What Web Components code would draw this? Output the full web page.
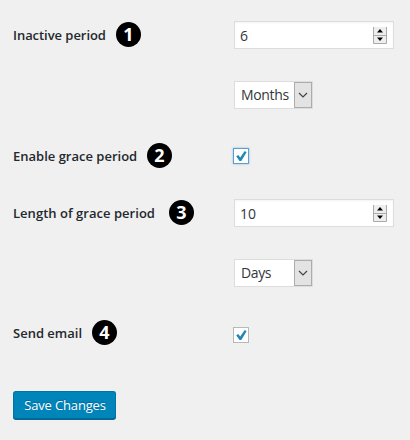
<!DOCTYPE html>
<html lang="en"><head><meta charset="utf-8"><title>Settings</title>
<style>html,body{margin:0;background:#f0f0f0}body{font-family:"Open Sans","Noto Sans",sans-serif;color:#23282d}</style></head>
<body><settings-form></settings-form>
<script>
const define=(name,html)=>customElements.define(name,class extends HTMLElement{
  constructor(){super();const t=document.createElement('template');t.innerHTML=html;
    this.attachShadow({mode:'open'}).append(t.content.cloneNode(true));}
});
define('number-badge',`<style>:host{display:flex;align-items:center;justify-content:center;flex:none;width:25px;height:25px;border-radius:50%;background:#000;color:#fff;font:700 18px/25px "Open Sans",sans-serif}</style><span><slot></slot></span>`);
define('setting-row',`<style>:host{display:grid;grid-template-columns:221px 1fr;align-items:center;padding-left:13px;box-sizing:border-box}
.label{display:flex;align-items:center;font:600 13px/20px "Open Sans",sans-serif;white-space:nowrap;padding-bottom:var(--lift,1px)}
.text{width:var(--w);letter-spacing:var(--ls,0)}</style><div class="label"><span class="text"><slot name="label"></slot></span><slot name="badge"></slot></div><div><slot></slot></div>`);
define('number-field',`<style>:host{display:flex;box-sizing:border-box;width:160px;height:28px;border:1px solid #ddd;background:#fff;padding:0 6px 0 5px;align-items:center;justify-content:space-between;font-size:14px;line-height:20px;color:#32373c;box-shadow:inset 0 1px 2px rgba(0,0,0,.05)}svg{display:block}span{padding-top:1px}</style><span><slot></slot></span>
<svg width="14" height="17" viewBox="0 0 14 17"><path fill="#eee" d="M0 0h14v17H0z"/><path d="M.5 0v16.500h13V0M1 8.500h12" fill="none" stroke="#aaa"/><path d="M7 2l3 3.500H4zM7 14l3-3.500H4z" fill="#000"/></svg>`);
define('select-field',`<style>:host{display:flex;box-sizing:border-box;width:79px;height:28px;border:1px solid #ddd;background:#fff;padding-left:6px;align-items:center;justify-content:space-between;font-size:14px;line-height:20px;color:#32373c}i{display:grid;place-items:center;box-sizing:border-box;width:18px;height:26px;border:1px solid #acacac;background:#e3e3e3}span{letter-spacing:var(--ls,0)}svg{display:block}</style><span><slot></slot></span><i><svg width="10" height="7" viewBox="0 0 10 7"><path d="M1 1l4 4 4-4" fill="none" stroke="#444" stroke-width="1.200"/></svg></i>`);
define('check-field',`<style>:host{display:block;box-sizing:border-box;width:16px;height:16px;margin-left:-1px;border:1px solid #b4b9be;background:#fff}:host([focused]){border-color:#5b9dd9;box-shadow:0 0 2px rgba(30,140,190,.5)}svg{display:block}</style><svg width="14" height="14" viewBox="0 0 14 14"><path d="M2.200 7.200L4.300 5.900 6.200 8.500 10.700 2.100 12.600 3.200 7.300 12H5.500z" fill="#2585b5"/></svg>`);
define('primary-button',`<style>:host{display:block}button{display:block;box-sizing:border-box;width:103px;height:28px;padding:0 0 0 1px;border:1px solid #0073aa;border-bottom-color:#006799;border-radius:3px;background:#0085ba;color:#fff;font:13px/26px "Open Sans",sans-serif;letter-spacing:-.15px;text-shadow:0 -1px 1px #006799;white-space:nowrap;box-shadow:0 1px 0 #006799}</style><button><slot></slot></button>`);
define('settings-form',`<style>:host{display:flex;flex-direction:column;width:410px;height:440px;box-sizing:border-box;padding-top:5px;background:#f0f0f0;overflow:hidden}primary-button{margin:28px 0 0 13px}</style>
<setting-row style="height:60px;--w:103px;--ls:-.05px"><span slot="label">Inactive period</span><number-badge slot="badge">1</number-badge><number-field>6</number-field></setting-row>
<setting-row style="height:60px"><select-field style="--ls:-.35px">Months</select-field></setting-row>
<setting-row style="height:62px;--w:134px"><span slot="label">Enable grace period</span><number-badge slot="badge">2</number-badge><check-field focused></check-field></setting-row>
<setting-row style="height:52px;--w:156px;--ls:.03px"><span slot="label">Length of grace period</span><number-badge slot="badge">3</number-badge><number-field>10</number-field></setting-row>
<setting-row style="height:68px"><select-field style="--ls:-.4px">Days</select-field></setting-row>
<setting-row style="height:56px;--w:79px;--lift:5px"><span slot="label">Send email</span><number-badge slot="badge">4</number-badge><check-field></check-field></setting-row>
<primary-button>Save Changes</primary-button>`);
</script></body></html>
